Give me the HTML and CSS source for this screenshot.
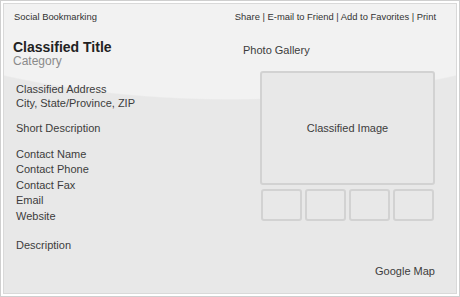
FILE: index.html
```html
<!DOCTYPE html>
<html lang="en">
<head>
    <meta charset="UTF-8">
    <meta name="viewport" content="width=device-width, initial-scale=1">
    <title>Classified Listing</title>
    <link rel="stylesheet" href="styles.css">
</head>
<body>
    <div class="frame">
        <div class="panel">
            <div class="toolbar">
                <span>Social Bookmarking</span>
                <span>Share | E-mail to Friend | Add to Favorites | Print</span>
            </div>
            <div class="content">
                <div class="details">
                    <h2 class="title">Classified Title</h2>
                    <div class="category">Category</div>
                    <div class="address">
                        <div>Classified Address</div>
                        <div>City, State/Province, ZIP</div>
                    </div>
                    <div class="short">Short Description</div>
                    <div class="contact">
                        <div>Contact Name</div>
                        <div>Contact Phone</div>
                        <div>Contact Fax</div>
                        <div>Email</div>
                        <div>Website</div>
                    </div>
                    <div class="desc">Description</div>
                </div>
                <div class="gallery">
                    <div class="gallery-label">Photo Gallery</div>
                    <div class="main-image">Classified Image</div>
                    <div class="thumbs">
                        <div class="thumb"></div>
                        <div class="thumb"></div>
                        <div class="thumb"></div>
                        <div class="thumb"></div>
                    </div>
                    <div class="map">Google Map</div>
                </div>
            </div>
        </div>
    </div>
</body>
</html>
```

FILE: styles.css
```css
body {
    margin: 0;
    background: #fff;
    font-family: "Liberation Sans", Arial, sans-serif;
    color: #444;
}
.frame {
    width: 460px;
    height: 297px;
    box-sizing: border-box;
    border: 1px solid #cfcfcf;
    padding: 2px;
}
.panel {
    height: 100%;
    box-sizing: border-box;
    border: 1px solid #d9d9d9;
    background: radial-gradient(ellipse 500px 220px at 226px -124px, #f2f2f2 99.4%, #e8e8e8 100%);
    display: flex;
    flex-direction: column;
}
.toolbar {
    display: flex;
    justify-content: space-between;
    padding: 7px 20px 0 10px;
    font-size: 9.4px;
    line-height: 11px;
    color: #333;
}
.content {
    display: flex;
}
.details {
    width: 239px;
    padding-left: 9px;
    box-sizing: border-box;
    font-size: 11px;
    color: #3c3c3c;
}
.title {
    margin: 17px 0 0;
    font-size: 14px;
    line-height: 16px;
    color: #222;
}
.category {
    font-size: 12px;
    line-height: 12px;
    color: #8a8a8a;
}
.address, .short, .contact, .desc {
    margin-left: 3px;
}
.address {
    margin-top: 15px;
    line-height: 14px;
}
.short {
    margin-top: 11px;
    line-height: 14px;
}
.contact {
    margin-top: 11.5px;
    line-height: 15.5px;
}
.desc {
    margin-top: 13.5px;
    line-height: 14px;
}
.gallery {
    flex: 1;
    padding-right: 21px;
    font-size: 11px;
    color: #3c3c3c;
}
.gallery-label {
    margin-top: 21.5px;
    line-height: 13px;
}
.main-image {
    margin: 14.5px 0 0 17px;
    height: 114px;
    box-sizing: border-box;
    border: 2px solid #d2d2d2;
    border-radius: 3px;
    background: #e8e8e8;
    display: flex;
    align-items: center;
    justify-content: center;
}
.thumbs {
    display: grid;
    grid-template-columns: repeat(4, 1fr);
    gap: 3px;
    margin: 4px 1px 0 18px;
}
.thumb {
    height: 32px;
    box-sizing: border-box;
    border: 2px solid #d2d2d2;
    border-radius: 3px;
}
.map {
    margin-top: 43.5px;
    line-height: 13px;
    text-align: right;
}
```
